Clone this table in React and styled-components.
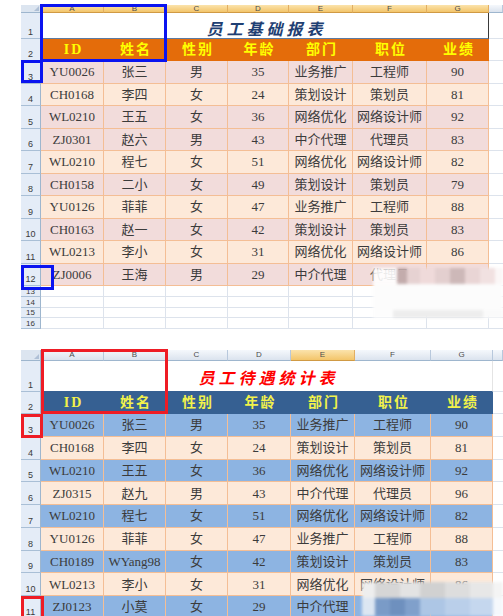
import React from "react";
import styled, { createGlobalStyle } from "styled-components";

const GlobalStyle = createGlobalStyle`
  * { box-sizing: border-box; }
  html, body { margin: 0; padding: 0; background: #fff; overflow: hidden; }
  body { font-family: "Liberation Serif", "Noto Sans CJK SC", serif; }
`;

const LETTERS = ["A", "B", "C", "D", "E", "F", "G"];
const HEAD = ["ID", "姓名", "性别", "年龄", "部门", "职位", "业绩"];

const PINK = "#F2DCDB";
const PEACH = "#FDE9D9";
const BLUE = "#8DB4E2";

const basicSheet = {
  cols: [20, 63, 62, 62, 61, 64, 74, 62],
  colHeadH: 8,
  titleH: 26,
  headH: 22,
  rowH: 22.5,
  spare: [10.75, 10.75, 10.75, 10.75],
  title: "员工基础报表",
  titleColor: "#1F3F73",
  titleEdge: "#3A3A3A",
  titleLine: "#5E7BA0",
  titlePad: 2,
  headBg: "#E46C0A",
  headFg: "#FFFF00",
  picked: LETTERS,
  fills: [PINK, PEACH, PINK, PINK, PEACH, PINK, PEACH, PINK, PEACH, PINK],
  rows: [
    ["YU0026", "张三", "男", "35", "业务推广", "工程师", "90"],
    ["CH0168", "李四", "女", "24", "策划设计", "策划员", "81"],
    ["WL0210", "王五", "女", "36", "网络优化", "网络设计师", "92"],
    ["ZJ0301", "赵六", "男", "43", "中介代理", "代理员", "83"],
    ["WL0210", "程七", "女", "51", "网络优化", "网络设计师", "82"],
    ["CH0158", "二小", "女", "49", "策划设计", "策划员", "79"],
    ["YU0126", "菲菲", "女", "47", "业务推广", "工程师", "88"],
    ["CH0163", "赵一", "女", "42", "策划设计", "策划员", "83"],
    ["WL0213", "李小", "女", "31", "网络优化", "网络设计师", "86"],
    ["ZJ0006", "王海", "男", "29", "中介代理", "代理员", "85"],
  ],
  boxes: [
    { x: 19, y: -1, w: 127, h: 58 },
    { x: 0, y: 55, w: 22, h: 23 },
    { x: 0, y: 260, w: 33, h: 25 },
  ],
  boxColor: "#0A14F0",
  smudge: {
    x: 352, y: 263, w: 130, h: 50,
    bands: [
      { h: 16, tiles: [[24, "rgba(255,255,255,0.9)"], [10, "#C3ACAC"], [13, "#E6D2D2"], [15, "#EFDADA"], [15, "#E3CFCF"], [15, "#CDB8B8"], [15, "#E9D5D5"], [15, "#F1E1E1"], [8, "#FBF7F7"]] },
      { h: 26, tiles: [[1, "#FCFCFC"]] },
      { h: 8, tiles: [[20, "#FDFDFD"], [90, "#EDEDED"], [20, "#FAFAFA"]] },
    ],
  },
};

const rewardSheet = {
  cols: [20, 63, 62, 62, 63, 64, 76, 62],
  colHeadH: 11,
  titleH: 31,
  headH: 22,
  rowH: 22.75,
  spare: [],
  title: "员工待遇统计表",
  titleColor: "#FF0000",
  titleEdge: "#E4E4E4",
  titleLine: "#366092",
  titlePad: 6,
  headBg: "#366092",
  headFg: "#F2F24A",
  picked: ["E"],
  fills: [BLUE, PEACH, BLUE, PEACH, BLUE, PEACH, BLUE, PEACH, BLUE],
  rows: [
    ["YU0026", "张三", "男", "35", "业务推广", "工程师", "90"],
    ["CH0168", "李四", "女", "24", "策划设计", "策划员", "81"],
    ["WL0210", "王五", "女", "36", "网络优化", "网络设计师", "92"],
    ["ZJ0315", "赵九", "男", "43", "中介代理", "代理员", "96"],
    ["WL0210", "程七", "女", "51", "网络优化", "网络设计师", "82"],
    ["YU0126", "菲菲", "女", "47", "业务推广", "工程师", "88"],
    ["CH0189", "WYang98", "女", "42", "策划设计", "策划员", "83"],
    ["WL0213", "李小", "女", "31", "网络优化", "网络设计师", "86"],
    ["ZJ0123", "小莫", "女", "29", "中介代理", "代理员", "80"],
  ],
  boxes: [
    { x: 20, y: -1, w: 127, h: 65 },
    { x: 0, y: 64, w: 22, h: 24 },
    { x: 0, y: 246, w: 23, h: 30 },
  ],
  boxColor: "#EE1C25",
  smudge: {
    x: 341, y: 232, w: 141, h: 34,
    bands: [
      { h: 16, tiles: [[13, "#EEEEEE"], [25, "#D6D6D6"], [20, "#E3E3E3"], [25, "#D1D1D1"], [25, "#DDDDDD"], [23, "#E7E7E7"], [10, "#F4F4F4"]] },
      { h: 18, tiles: [[13, "#DCE6F2"], [15, "#7A9BC7"], [15, "#6E90BE"], [15, "#80A0CB"], [25, "#ADC6E5"], [25, "#BACFEA"], [23, "#C5D7EE"], [10, "#F5F8FC"]] },
    ],
  },
};

export default function App() {
  return (
    <>
      <GlobalStyle />
      <Page>
        <Worksheet sheet={basicSheet} />
        <Worksheet sheet={rewardSheet} />
      </Page>
    </>
  );
}

function Worksheet({ sheet }) {
  const cols = sheet.cols.map(c => `${c}px`).join(" ") + " 1fr";
  const rowHeights = [sheet.colHeadH, sheet.titleH, sheet.headH, ...sheet.rows.map(() => sheet.rowH), ...sheet.spare];
  const rows = rowHeights.map(r => `${r}px`).join(" ");
  const firstSpare = sheet.rows.length + 3;

  return (
    <Sheet $cols={cols} $rows={rows}>
      <Corner />
      {LETTERS.map(l => <ColHead key={l} $on={sheet.picked.includes(l)}>{l}</ColHead>)}
      <ColHead />

      <RowHead>1</RowHead>
      <TitleCell $color={sheet.titleColor} $edge={sheet.titleEdge} $line={sheet.titleLine} $pad={sheet.titlePad}>
        {sheet.title}
      </TitleCell>
      <Blank />

      <RowHead>2</RowHead>
      {HEAD.map(h => <HeadCell key={h} $bg={sheet.headBg} $fg={sheet.headFg}>{h}</HeadCell>)}
      <Blank />

      {sheet.rows.map((row, i) => (
        <React.Fragment key={i}>
          <RowHead>{i + 3}</RowHead>
          {row.map((v, j) => <DataCell key={j} $bg={sheet.fills[i]}>{v}</DataCell>)}
          <Blank />
        </React.Fragment>
      ))}

      {sheet.spare.map((_, i) => (
        <React.Fragment key={"s" + i}>
          <RowHead $small>{firstSpare + i}</RowHead>
          {LETTERS.map(l => <Blank key={l} $grid />)}
          <Blank />
        </React.Fragment>
      ))}

      {sheet.boxes.map((b, i) => (
        <SelectBox key={"b" + i} $x={b.x} $y={b.y} $w={b.w} $h={b.h} $color={sheet.boxColor} />
      ))}

      <Smudge $x={sheet.smudge.x} $y={sheet.smudge.y} $w={sheet.smudge.w} $h={sheet.smudge.h}>
        {sheet.smudge.bands.map((band, i) => (
          <Band key={i} $h={band.h}>
            {band.tiles.map(([f, c], j) => <Tile key={j} $f={f} $c={c} />)}
          </Band>
        ))}
      </Smudge>
    </Sheet>
  );
}

const Page = styled.div`
  width: 503px;
  padding: 5px 0 0 21px;
  display: flex;
  flex-direction: column;
  gap: 21px;
`;

const Sheet = styled.div`
  position: relative;
  display: grid;
  grid-template-columns: ${p => p.$cols};
  grid-template-rows: ${p => p.$rows};
`;

const Corner = styled.div`
  position: relative;
  background: #DCE5F0;
  border-right: 1px solid #9EB6CE;
  border-bottom: 1px solid #9EB6CE;

  &::after {
    content: "";
    position: absolute;
    right: 1px;
    bottom: 1px;
    border-left: 5px solid transparent;
    border-bottom: 5px solid #AFC0D6;
  }
`;

const ColHead = styled.div`
  display: flex;
  align-items: center;
  justify-content: center;
  overflow: hidden;
  font: 8px/1 "Liberation Sans", sans-serif;
  color: #4C4C4C;
  background: ${p => p.$on ? "linear-gradient(#FBE3AC, #F3C56A)" : "linear-gradient(#F5F8FC, #DBE3EE)"};
  border-right: 1px solid ${p => p.$on ? "#E2AE62" : "#B8C8DC"};
  border-bottom: 1px solid ${p => p.$on ? "#D09A44" : "#9EB6CE"};
`;

const RowHead = styled.div`
  display: flex;
  align-items: flex-end;
  justify-content: center;
  overflow: hidden;
  padding-bottom: ${p => p.$small ? 0 : 1}px;
  font: ${p => p.$small ? 8 : 9}px/1 "Liberation Sans", sans-serif;
  color: #3A3A3A;
  background: #E4ECF7;
  border-right: 1px solid #9EB6CE;
  border-bottom: 1px solid #A9BFD6;
`;

const TitleCell = styled.div`
  grid-column: span 7;
  display: flex;
  align-items: flex-end;
  justify-content: center;
  padding-bottom: ${p => p.$pad}px;
  padding-left: 4px;
  background: #fff;
  border-right: 1px solid ${p => p.$edge};
  border-bottom: 1px solid ${p => p.$line};
  font-family: "Noto Sans CJK SC", sans-serif;
  font-size: 16px;
  font-weight: 700;
  font-style: italic;
  letter-spacing: 4px;
  line-height: 1;
  color: ${p => p.$color};
`;

const HeadCell = styled.div`
  display: flex;
  align-items: center;
  justify-content: center;
  padding-left: 2px;
  background: ${p => p.$bg};
  color: ${p => p.$fg};
  font: 700 14px/1 "Liberation Serif", "Noto Sans CJK SC", serif;
  letter-spacing: 2px;
`;

const DataCell = styled.div`
  display: flex;
  align-items: center;
  justify-content: center;
  white-space: nowrap;
  overflow: hidden;
  background: ${p => p.$bg};
  color: #3B3B3B;
  font: 13px/1 "Liberation Serif", "Noto Sans CJK SC", serif;
  border-right: 1px solid #F4BE95;
  border-bottom: 1px solid #F4BE95;
`;

const Blank = styled.div`
  background: #fff;
  border-bottom: 1px solid #DDE3EC;
  border-right: ${p => p.$grid ? "1px solid #DDE3EC" : "none"};
`;

const SelectBox = styled.div`
  position: absolute;
  left: ${p => p.$x}px;
  top: ${p => p.$y}px;
  width: ${p => p.$w}px;
  height: ${p => p.$h}px;
  border: 3px solid ${p => p.$color};
  pointer-events: none;
`;

const Smudge = styled.div`
  position: absolute;
  left: ${p => p.$x}px;
  top: ${p => p.$y}px;
  width: ${p => p.$w}px;
  height: ${p => p.$h}px;
  display: flex;
  flex-direction: column;
  filter: blur(1.5px);
  pointer-events: none;
`;

const Band = styled.div`
  display: flex;
  height: ${p => p.$h}px;
`;

const Tile = styled.div`
  flex: ${p => p.$f};
  background: ${p => p.$c};
`;
